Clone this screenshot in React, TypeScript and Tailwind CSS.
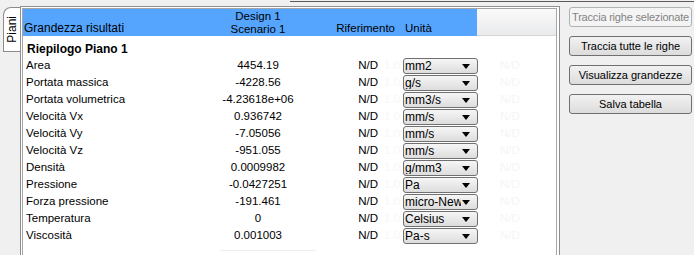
const rows = [
  { name: "Area", value: "4454.19", unit: "mm2" },
  { name: "Portata massica", value: "-4228.56", unit: "g/s" },
  { name: "Portata volumetrica", value: "-4.23618e+06", unit: "mm3/s" },
  { name: "Velocità Vx", value: "0.936742", unit: "mm/s" },
  { name: "Velocità Vy", value: "-7.05056", unit: "mm/s" },
  { name: "Velocità Vz", value: "-951.055", unit: "mm/s" },
  { name: "Densità", value: "0.0009982", unit: "g/mm3" },
  { name: "Pressione", value: "-0.0427251", unit: "Pa" },
  { name: "Forza pressione", value: "-191.461", unit: "micro-New" },
  { name: "Temperatura", value: "0", unit: "Celsius" },
  { name: "Viscosità", value: "0.001003", unit: "Pa-s" },
]

const buttons = ["Traccia tutte le righe", "Visualizza grandezze", "Salva tabella"]

function Combo({ unit }: { unit: string }) {
  return (
    <div className="mt-[1px] flex h-[16px] w-[75px] items-center overflow-hidden rounded-[3px] border border-[#707070] bg-gradient-to-b from-[#f6f6f6] to-[#dddddd] pl-[1px]">
      <span className="flex-1 overflow-hidden whitespace-nowrap text-[12px] leading-none">{unit}</span>
      <svg width="8" height="5" viewBox="0 0 8 5" className="mr-[7px] ml-[1px] shrink-0">
        <path d="M0 0H8L4 5Z" fill="#000" />
      </svg>
    </div>
  )
}

export default function App() {
  return (
    <div className="relative flex h-[255px] w-[694px] overflow-hidden bg-[#f0f0f0] font-['Liberation_Sans',Arial,sans-serif] text-[11.5px] text-black">
      <div className="absolute top-[1px] left-[290px] h-[1px] w-[404px] bg-[#5a5a5a]" />

      {/* tab strip */}
      <div className="w-[20px] shrink-0 pt-[7px] pl-[3px]">
        <div className="flex h-[45px] w-[17px] items-center justify-center rounded-tl-[8px] border border-r-0 border-[#8c8c8c] bg-white">
          <span className="rotate-180 text-[12px] leading-none [writing-mode:vertical-rl]">Piani</span>
        </div>
      </div>

      {/* table */}
      <div className="mt-[6px] w-[540px] shrink-0 border-t border-r border-l border-[#8f8f8f] bg-white">
        <div className="mt-[1px] ml-[1px] h-full w-[535px] border-t border-r border-l border-[#a5a5a5] bg-white">
          <div className="flex h-[27px]">
            <div className="flex w-[454px] bg-[#55a5ff] leading-[13px]">
              <div className="flex w-[177px] items-end pb-[1px] pl-[1px] text-[12px]">Grandezza risultati</div>
              <div className="flex w-[116px] flex-col items-center pt-[1px] pb-[1px]">
                <span>Design 1</span>
                <span>Scenario 1</span>
              </div>
              <div className="flex w-[85px] items-end justify-end pb-[1px] pr-[6px]">Riferimento</div>
              <div className="flex items-end pb-[1px] pl-[4px]">Unità</div>
            </div>
            <div className="flex-1 border-b border-[#d5d5d5] bg-gradient-to-b from-[#fafafa] to-[#e9eaec]" />
          </div>

          <div className="pt-[4px]">
            <div className="flex h-[17px] items-center pl-[4px] text-[12px] font-bold">Riepilogo Piano 1</div>
            {rows.map((r) => (
              <div key={r.name} className="flex h-[17px] leading-[16px]">
                <div className="w-[177px] pl-[3px]">{r.name}</div>
                <div className="w-[116px] text-center">{r.value}</div>
                <div className="w-[62px] text-right">N/D</div>
                <div className="w-[25px] pl-[6px] text-[#f7f7f7]">1.0</div>
                <Combo unit={r.unit} />
                <div className="pl-[22px] text-[#f5f5f5]">N/D</div>
              </div>
            ))}
            <div className="mt-[6px] ml-[197px] h-[1px] w-[96px] bg-[#eeeeee]" />
          </div>
        </div>
      </div>

      {/* buttons */}
      <div className="flex flex-1 flex-col gap-[9px] pt-[7px] pl-[9px] text-[11px]">
        <button className="h-[20px] w-[123px] whitespace-nowrap rounded-[3px] border border-[#adb2b5] bg-[#f4f4f4] px-0 leading-none tracking-[-0.2px] text-[#838383]">
          Traccia righe selezionate
        </button>
        {buttons.map((b) => (
          <button
            key={b}
            className="h-[20px] w-[123px] whitespace-nowrap rounded-[3px] border border-[#707070] bg-gradient-to-b from-[#f2f2f2] to-[#dcdcdc] leading-none"
          >
            {b}
          </button>
        ))}
      </div>
    </div>
  )
}
